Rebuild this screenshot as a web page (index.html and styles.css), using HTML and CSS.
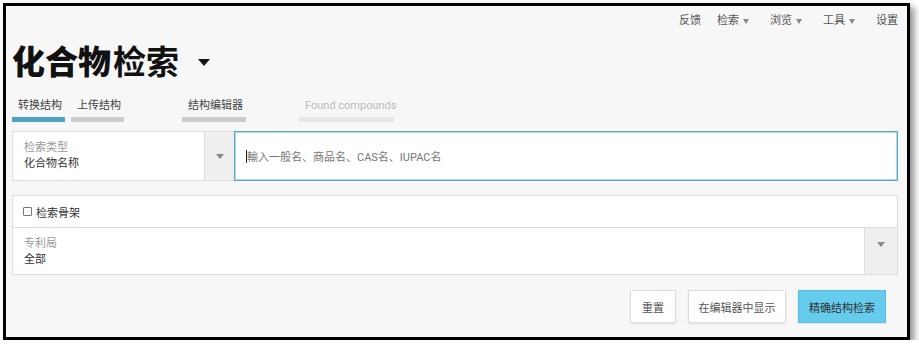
FILE: index.html
```html
<!DOCTYPE html>
<html lang="zh">
<head>
<meta charset="utf-8">
<title>化合物检索</title>
<link rel="stylesheet" href="styles.css">
</head>
<body>
<div class="frame">
  <nav class="topnav">
    <span class="nav-item">反馈</span>
    <span class="nav-item dd">检索<i class="tri-s"></i></span>
    <span class="nav-item dd">浏览<i class="tri-s"></i></span>
    <span class="nav-item dd">工具<i class="tri-s"></i></span>
    <span class="nav-item">设置</span>
  </nav>

  <div class="title-row">
    <h1 class="title"><span class="heavy">化合物</span><span class="semi">检索</span></h1>
    <i class="title-caret"></i>
  </div>

  <div class="tabs">
    <div class="tab t1 active"><span class="tab-label">转换结构</span><span class="tab-bar"></span></div>
    <div class="tab t2"><span class="tab-label">上传结构</span><span class="tab-bar"></span></div>
    <div class="tab t3"><span class="tab-label">结构编辑器</span><span class="tab-bar"></span></div>
    <div class="tab t4 muted"><span class="tab-label">Found compounds</span><span class="tab-bar"></span></div>
  </div>

  <div class="search-row">
    <div class="select">
      <div class="select-body">
        <div class="field-label">检索类型</div>
        <div class="field-value">化合物名称</div>
      </div>
      <div class="select-btn"><i class="tri-g"></i></div>
    </div>
    <div class="search-input">
      <span class="cursor"></span><span class="placeholder">輸入一般名、商品名、CAS名、IUPAC名</span>
    </div>
  </div>

  <div class="options">
    <div class="opt-check">
      <span class="checkbox"></span><span class="check-label">检索骨架</span>
    </div>
    <div class="opt-select">
      <div class="select-body">
        <div class="field-label">专利局</div>
        <div class="field-value">全部</div>
      </div>
      <div class="select-btn top"><i class="tri-g"></i></div>
    </div>
  </div>

  <div class="actions">
    <button class="btn b-reset">重置</button>
    <button class="btn b-editor">在编辑器中显示</button>
    <button class="btn primary b-search">精确结构检索</button>
  </div>
</div>
</body>
</html>
```

FILE: styles.css
```css
* { box-sizing: border-box; }

html, body {
  margin: 0;
  padding: 0;
  background: #ffffff;
}

body {
  font-family: Roboto, "Noto Sans CJK SC", "Noto Sans", sans-serif;
  color: #333;
  font-size: 11px;
}

.frame {
  margin: 3px 0 0 3px;
  width: 907px;
  height: 337px;
  border: 3px solid #000;
  background: #f7f7f7;
  box-shadow: 4px 4px 7px rgba(0, 0, 0, 0.45);
  padding: 0 9px 0 6px;
  display: flex;
  flex-direction: column;
}

/* top nav */
.topnav {
  height: 30px;
  display: flex;
  justify-content: flex-end;
  align-items: center;
  gap: 16px;
  font-size: 11px;
  color: #555;
}
.nav-item {
  display: flex;
  align-items: center;
  line-height: 14px;
}
.nav-item.dd { padding-right: 5px; }
.tri-s {
  display: inline-block;
  margin-left: 4px;
  width: 0;
  height: 0;
  border-left: 3px solid transparent;
  border-right: 3px solid transparent;
  border-top: 5px solid #888;
}

/* title */
.title-row {
  margin-top: 8px;
  display: flex;
  align-items: center;
}
.title {
  margin: 0;
  font-size: 33px;
  line-height: 33px;
  color: #111;
  font-family: "Noto Sans CJK SC", sans-serif;
  letter-spacing: 0;
}
.heavy { font-weight: 900; }
.semi { font-weight: 700; margin-left: 2px; }
.title-caret {
  margin-left: 19px;
  margin-top: 4px;
  width: 0;
  height: 0;
  border-left: 6px solid transparent;
  border-right: 6px solid transparent;
  border-top: 7px solid #111;
}

/* tabs */
.tabs {
  margin-top: 22px;
  display: flex;
}
.tab {
  display: flex;
  flex-direction: column;
}
.tab-label {
  padding-left: 6px;
  line-height: 14px;
  font-size: 11px;
  color: #444;
  white-space: nowrap;
}
.tab-bar {
  margin-top: 4px;
  height: 5px;
  background: #cccccc;
}
.tab.active .tab-bar { background: #4ea5c1; }
.tab.muted .tab-label { color: #bbb; }
.tab.muted .tab-bar { background: #e7e7e7; }
.t1 { width: 53px; }
.t2 { width: 53px; margin-left: 6px; }
.t3 { width: 64px; margin-left: 58px; }
.t4 { width: 95px; margin-left: 53px; }

/* search row */
.search-row {
  margin-top: 9px;
  height: 50px;
  display: flex;
}
.select {
  width: 222px;
  display: flex;
  background: #fff;
  border: 1px solid #dddddd;
  border-right: none;
}
.select-body {
  flex: 1;
  padding: 8px 11px 0;
}
.field-label {
  color: #999;
  line-height: 16px;
}
.field-value {
  color: #333;
  line-height: 16px;
}
.select-btn {
  width: 30px;
  background: #efefef;
  border-left: 1px solid #dddddd;
  display: flex;
  justify-content: center;
  align-items: center;
}
.select-btn.top {
  align-items: flex-start;
  padding-top: 14px;
  width: 33px;
}
.tri-g {
  display: block;
  width: 0;
  height: 0;
  border-left: 4px solid transparent;
  border-right: 4px solid transparent;
  border-top: 5px solid #888;
}
.search-input {
  flex: 1;
  background: #fff;
  border: 1px solid #5aaac6;
  box-shadow: inset 0 0 0 1px rgba(120, 190, 214, 0.6);
  display: flex;
  align-items: center;
  padding-left: 11px;
}
.cursor {
  width: 1px;
  height: 13px;
  background: #222;
}
.placeholder {
  color: #777;
  font-size: 11px;
}

/* options */
.options {
  margin-top: 14px;
  background: #fff;
  border: 1px solid #dddddd;
  display: flex;
  flex-direction: column;
}
.opt-check {
  height: 32px;
  border-bottom: 1px solid #dddddd;
  display: flex;
  align-items: center;
  padding-left: 10px;
}
.checkbox {
  width: 9px;
  height: 9px;
  border: 1px solid #777;
  border-radius: 1px;
  background: #fff;
  margin-right: 4px;
}
.check-label { color: #333; }
.opt-select {
  height: 46px;
  display: flex;
}

/* actions */
.actions {
  margin-top: 15px;
  display: flex;
  justify-content: flex-end;
  gap: 12px;
  padding-right: 12px;
}
.btn {
  height: 33px;
  border: 1px solid #dcdcdc;
  background: #fff;
  color: #555;
  font-family: Roboto, "Noto Sans CJK SC", sans-serif;
  font-size: 11px;
  padding: 0;
  box-shadow: 0 1px 2px rgba(0, 0, 0, 0.08);
  cursor: pointer;
}
.b-reset { width: 46px; }
.b-editor { width: 98px; }
.b-search { width: 88px; }
.btn.primary {
  background: #66ccee;
  border-color: #56bddf;
  color: #333;
}
```
